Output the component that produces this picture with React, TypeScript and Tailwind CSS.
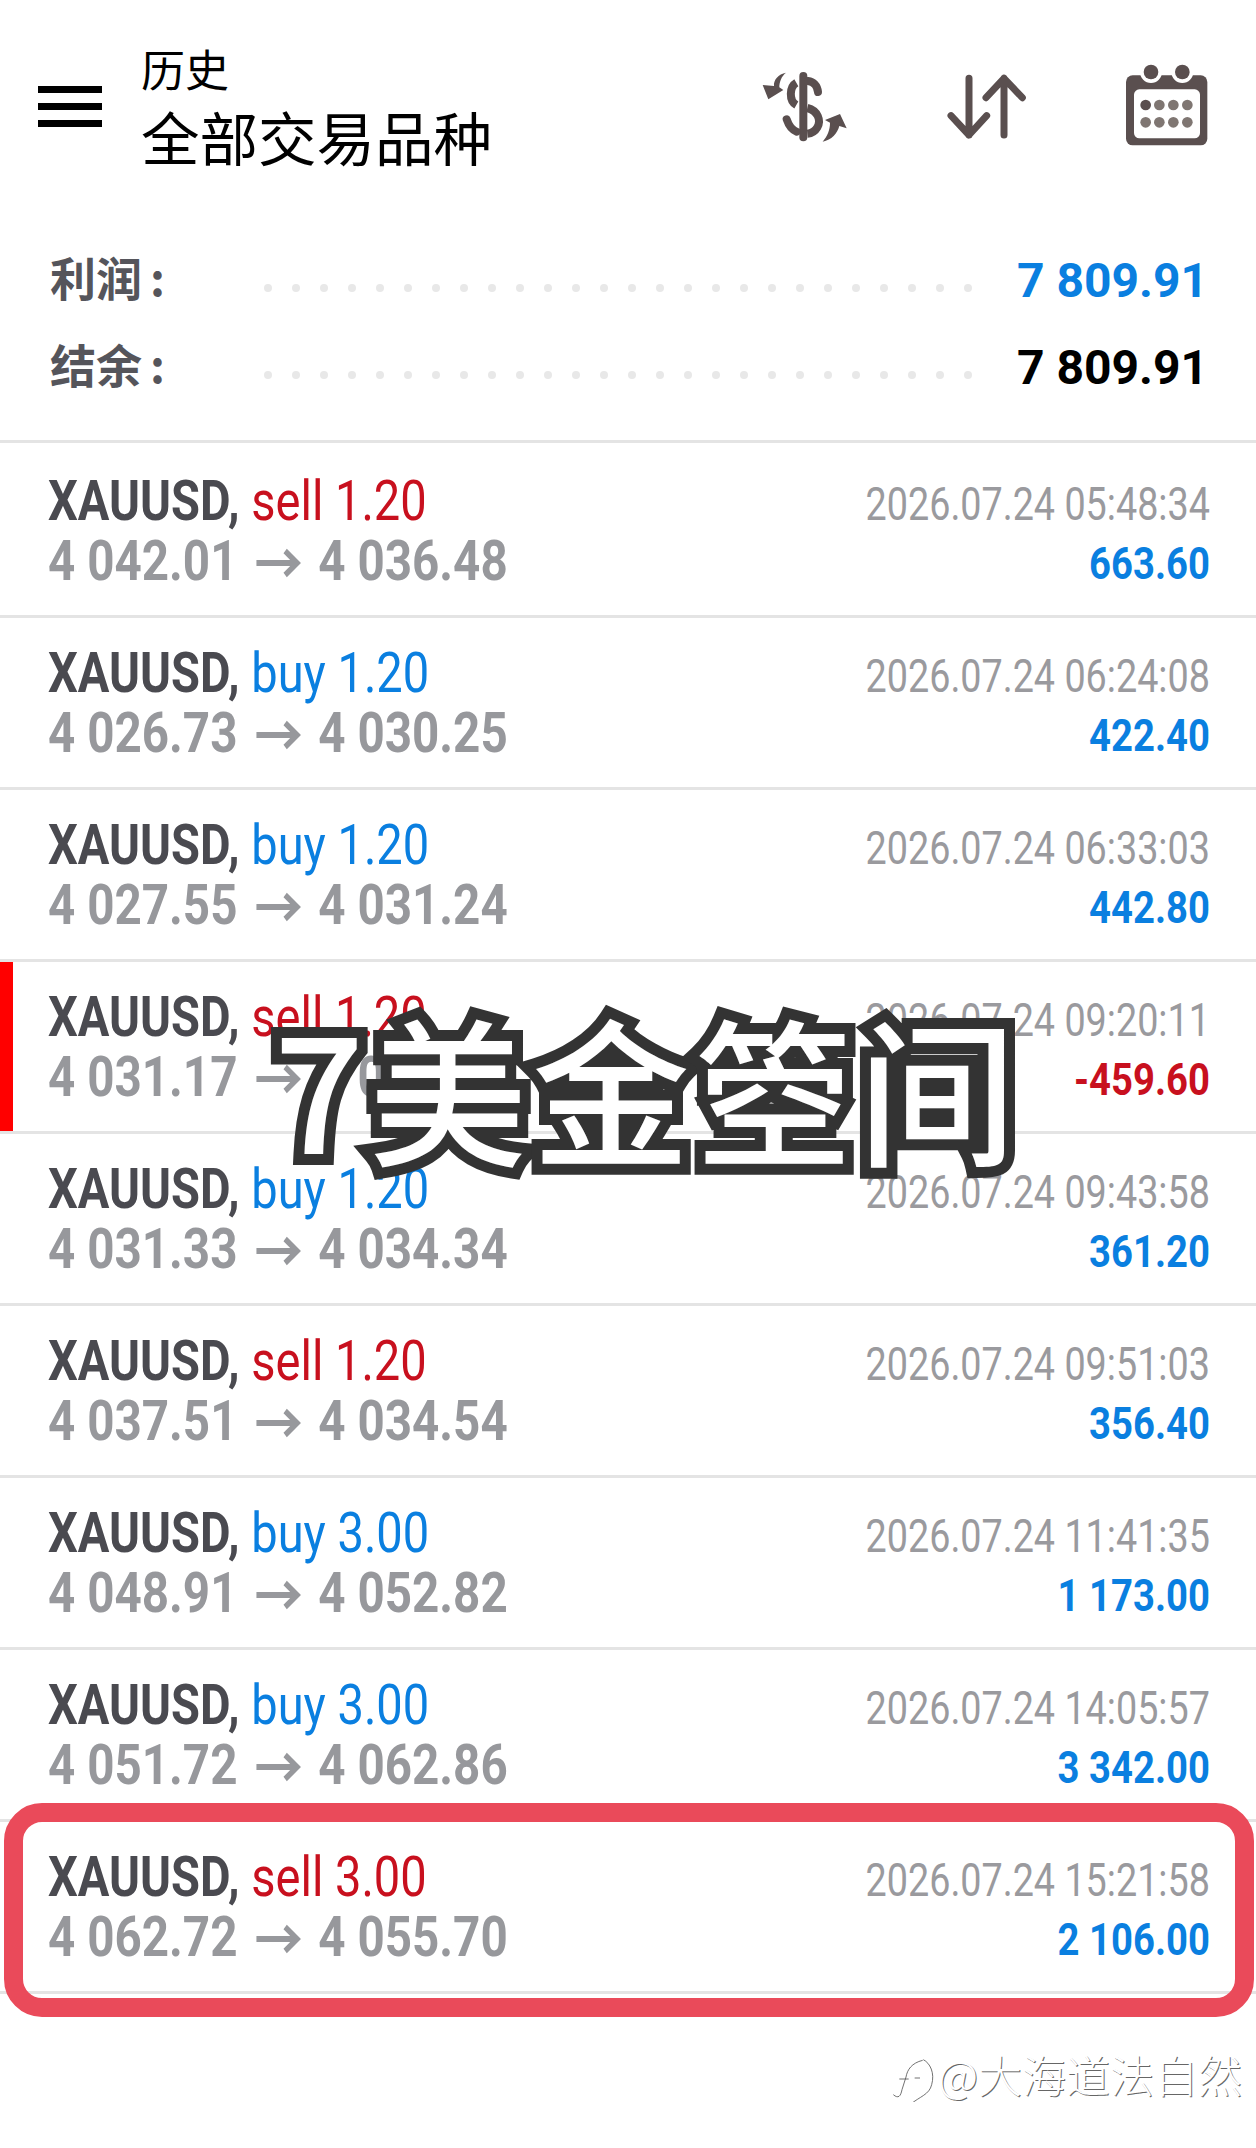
const trades = [
  { side: "sell", lots: "1.20", open: "4 042.01", close: "4 036.48", time: "2026.07.24 05:48:34", profit: "663.60" },
  { side: "buy", lots: "1.20", open: "4 026.73", close: "4 030.25", time: "2026.07.24 06:24:08", profit: "422.40" },
  { side: "buy", lots: "1.20", open: "4 027.55", close: "4 031.24", time: "2026.07.24 06:33:03", profit: "442.80" },
  { side: "sell", lots: "1.20", open: "4 031.17", close: "4 034.00", time: "2026.07.24 09:20:11", profit: "-459.60" },
  { side: "buy", lots: "1.20", open: "4 031.33", close: "4 034.34", time: "2026.07.24 09:43:58", profit: "361.20" },
  { side: "sell", lots: "1.20", open: "4 037.51", close: "4 034.54", time: "2026.07.24 09:51:03", profit: "356.40" },
  { side: "buy", lots: "3.00", open: "4 048.91", close: "4 052.82", time: "2026.07.24 11:41:35", profit: "1 173.00" },
  { side: "buy", lots: "3.00", open: "4 051.72", close: "4 062.86", time: "2026.07.24 14:05:57", profit: "3 342.00" },
  { side: "sell", lots: "3.00", open: "4 062.72", close: "4 055.70", time: "2026.07.24 15:21:58", profit: "2 106.00" },
];

const DOTS = Array.from({ length: 26 }, (_, i) => i);

function DollarIcon() {
  return (
    <svg width="130" height="110" viewBox="0 0 390 330" fill="none" stroke="#5a4f4f" strokeWidth="24">
      <path d="M160 78V262" strokeLinecap="round" strokeWidth="24" />
      <path d="M174 93C190 95 202 106 204 126" strokeLinecap="round" />
      <path d="M139 98C118 110 116 152 139 165" />
      <path d="M172 174C204 182 214 212 202 232C194 246 182 250 172 251" />
      <path d="M110 208C116 226 126 240 140 245" strokeLinecap="round" />
      <path d="M108 68C85 72 70 90 72 108L38 105L55 148L100 120L88 112C88 95 95 78 108 68Z" fill="#5a4f4f" stroke="none" />
      <path d="M218 275C232 258 240 240 240 218L225 210L270 192L290 235L268 228C262 250 245 270 218 275Z" fill="#5a4f4f" stroke="none" />
    </svg>
  );
}

function SortIcon() {
  return (
    <svg width="130" height="110" viewBox="0 0 390 330" fill="none" stroke="#5a4f4f" strokeWidth="21" strokeLinecap="round" strokeLinejoin="round">
      <path d="M117 85V255M63 197L117 255L170 197" />
      <path d="M222 85V255M168 143L222 85L277 143" />
    </svg>
  );
}

function CalendarIcon() {
  const xs = [107, 148, 190, 232];
  return (
    <svg width="130" height="110" viewBox="0 0 390 330">
      <rect x="48" y="76" width="244" height="210" rx="20" fill="#5a4f4f" />
      <rect x="72" y="118" width="198" height="147" rx="16" fill="#fff" />
      <circle cx="123" cy="66" r="33" fill="#fff" />
      <circle cx="217" cy="66" r="33" fill="#fff" />
      <circle cx="123" cy="66" r="22" fill="#5a4f4f" />
      <circle cx="217" cy="66" r="22" fill="#5a4f4f" />
      {xs.map((x, i) => (
        <circle key={x} cx={x} cy="165" r="16" fill={i === 0 ? "#5a4f4f" : "#7f7672"} />
      ))}
      {xs.map((x) => (
        <circle key={x} cx={x} cy="217" r="16" fill="#7f7672" />
      ))}
    </svg>
  );
}

function Arrow() {
  return (
    <svg width="54" height="30" viewBox="0 0 54 30" fill="none" stroke="#97989c" strokeWidth="6" className="ml-[22px] mr-[19px] inline-block align-[2px]">
      <path d="M0 15H48M34 3L48 15L34 27" />
    </svg>
  );
}

function SummaryRow({ label, value, valueColor }: { label: string; value: string; valueColor: string }) {
  return (
    <div className="flex h-[87px] items-center pl-[50px] pr-[48px]">
      <div className="w-[214px] pb-[10px] text-[46px] font-bold leading-none text-[#55555b]">
        {label}
        <span className="ml-[8px]">:</span>
      </div>
      <div className="flex w-[708px] justify-between pt-[15px]">
        {DOTS.map((d) => (
          <span key={d} className="h-[8px] w-[8px] rounded-full bg-[#e8e8e8]" />
        ))}
      </div>
      <div className={`ml-auto whitespace-nowrap font-['Roboto',sans-serif] text-[48px] font-bold leading-none ${valueColor}`}>
        {value}
      </div>
    </div>
  );
}

function TradeRow({ trade, index }: { trade: (typeof trades)[number]; index: number }) {
  const sideColor = trade.side === "sell" ? "text-[#c8101e]" : "text-[#0a7fe0]";
  const loss = trade.profit.startsWith("-");
  return (
    <div
      className={`relative flex justify-between border-b-[3px] border-[#e4e4e4] pl-[48px] pr-[46px] font-['Roboto',sans-serif] ${
        index === 0 ? "h-[175px] pt-[28px]" : "h-[172px] pt-[25px]"
      }`}
    >
      {index === 3 && <div className="absolute bottom-0 left-0 top-0 w-[13px] bg-[#ff0000]" />}
      <div className="whitespace-nowrap">
        <div className="origin-left scale-x-[0.84] text-[56px] leading-[60px]">
          <span className="font-bold text-[#4a4a50]">XAUUSD, </span>
          <span className={sideColor}>
            {trade.side} {trade.lots}
          </span>
        </div>
        <div className="origin-left scale-x-[0.85] text-[56px] font-bold leading-[60px] text-[#97989c]">
          {trade.open}
          <Arrow />
          {trade.close}
        </div>
      </div>
      <div className="whitespace-nowrap pt-[3px] text-right">
        <div className="origin-right scale-x-[0.82] text-[46px] leading-[60px] text-[#9a9a9e]">{trade.time}</div>
        <div className={`origin-right scale-x-[0.85] text-[45px] font-bold leading-[60px] ${loss ? "text-[#c8101e]" : "text-[#0a7fe0]"}`}>
          {trade.profit}
        </div>
      </div>
      {index === 8 && (
        <div className="absolute left-[4px] right-[2px] top-[-19px] h-[214px] rounded-[38px] border-[19px] border-[#ea4a5a]" />
      )}
    </div>
  );
}

export default function App() {
  return (
    <div className="relative h-[2148px] w-[1256px] overflow-hidden bg-white font-['Noto_Sans_CJK_SC',sans-serif]">
      <header className="flex h-[237px] items-start">
        <div className="ml-[38px] mt-[86px] flex w-[64px] flex-col gap-[10px]">
          <div className="h-[7px] bg-black" />
          <div className="h-[7px] bg-black" />
          <div className="h-[7px] bg-black" />
        </div>
        <div className="ml-[39px] mt-[38px] text-black">
          <div className="text-[44px] leading-[60px]">历史</div>
          <div className="text-[58.5px] leading-[76px]">全部交易品种</div>
        </div>
        <div className="ml-auto mt-[50px] flex">
          <DollarIcon />
          <div className="ml-[50px]">
            <SortIcon />
          </div>
          <div className="ml-[50px] mr-[16px]">
            <CalendarIcon />
          </div>
        </div>
      </header>

      <section className="pb-[29px]">
        <SummaryRow label="利润" value="7 809.91" valueColor="text-[#0a7fe0]" />
        <SummaryRow label="结余" value="7 809.91" valueColor="text-black" />
      </section>

      <main className="border-t-[3px] border-[#e4e4e4]">
        {trades.map((t, i) => (
          <TradeRow key={t.time} trade={t} index={i} />
        ))}
      </main>

      {/* big caption over the list */}
      <div className="absolute left-[274px] top-[986px] whitespace-nowrap text-[158px] font-medium leading-[200px] tracking-[5px] text-white [-webkit-text-stroke:22px_#333333] [paint-order:stroke_fill] [stroke-linejoin:round]">
        7美金箜间
      </div>

      {/* watermark */}
      <div className="absolute left-[890px] top-[2046px] flex items-center">
        <svg width="48" height="56" viewBox="30 19 144 168" fill="none" stroke="#555" strokeWidth="2.5">
          <path d="M40 165C55 178 62 170 66 150L78 112C82 90 95 70 128 62" />
          <path d="M58 118H86M104 115H120" />
          <path d="M130 60C150 70 165 100 155 135C148 165 120 170 90 195" />
        </svg>
        <span className="text-[44px] font-light leading-[56px] text-white [text-shadow:1px_1px_0_#666666]">@大海道法自然</span>
      </div>
    </div>
  );
}
